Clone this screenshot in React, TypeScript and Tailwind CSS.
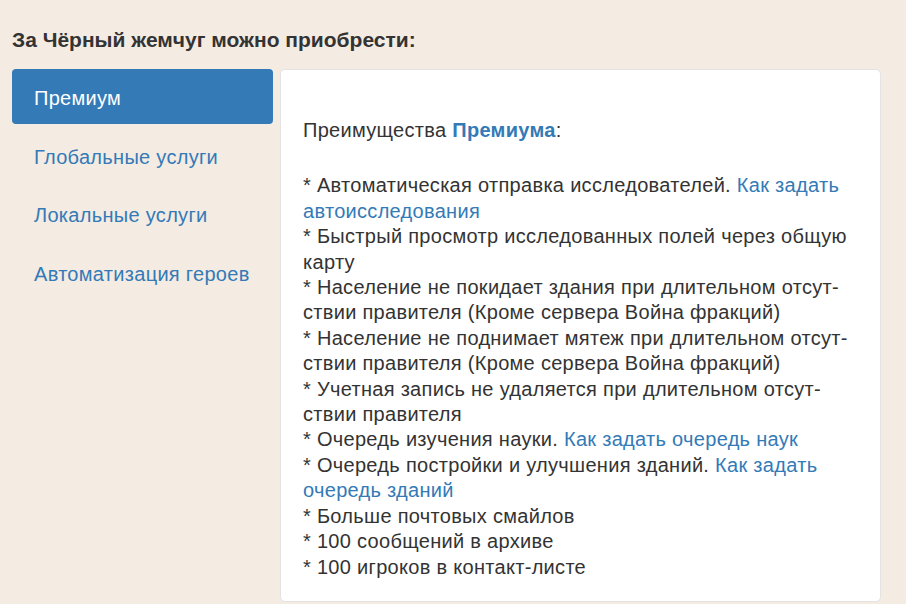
const tabs = ["Премиум", "Глобальные услуги", "Локальные услуги", "Автоматизация героев"];

function L({ children }: { children: React.ReactNode }) {
  return <a className="text-[#337ab7]">{children}</a>;
}

export default function App() {
  return (
    <div className="min-h-screen bg-[#f4ebe3] text-[#333] px-3 font-['Liberation_Sans',Arial,sans-serif]">
      <h2 className="pt-[29px] pb-[18px] text-[21px] leading-[22px] font-bold">За Чёрный жемчуг можно приобрести:</h2>
      <div className="flex gap-[7px] items-start">
        {/* tabs */}
        <ul className="w-[261px] shrink-0 flex flex-col gap-[3.5px]">
          {tabs.map((t, i) => (
            <li key={t}>
              <a
                className={
                  "block rounded-[4px] px-[22px] pt-[17px] pb-[13px] text-[20px] leading-[25px] tracking-[0.3px] " +
                  (i === 0 ? "bg-[#337ab7] text-white" : "text-[#337ab7]")
                }
              >
                {t}
              </a>
            </li>
          ))}
        </ul>

        {/* content */}
        <div className="w-[601px] bg-white border border-[#e3e3e3] rounded-[5px] px-[22px] pt-[48px] pb-[21px] text-[20px] leading-[25.4px] tracking-[0.3px]">
          <p>
            Преимущества <b className="text-[#337ab7]">Премиума</b>:
          </p>
          <p className="mt-[30px]">
            * Автоматическая отправка исследователей. <L>Как задать<br />автоисследования</L>
            <br />
            * Быстрый просмотр исследованных полей через общую<br />карту
            <br />
            * Население не покидает здания при длительном отсут-<br />ствии правителя (Кроме сервера Война фракций)
            <br />
            * Население не поднимает мятеж при длительном отсут-<br />ствии правителя (Кроме сервера Война фракций)
            <br />
            * Учетная запись не удаляется при длительном отсут-<br />ствии правителя
            <br />
            * Очередь изучения науки. <L>Как задать очередь наук</L>
            <br />
            * Очередь постройки и улучшения зданий. <L>Как задать<br />очередь зданий</L>
            <br />
            * Больше почтовых смайлов
            <br />
            * 100 сообщений в архиве
            <br />
            * 100 игроков в контакт-листе
          </p>
        </div>
      </div>
    </div>
  );
}
